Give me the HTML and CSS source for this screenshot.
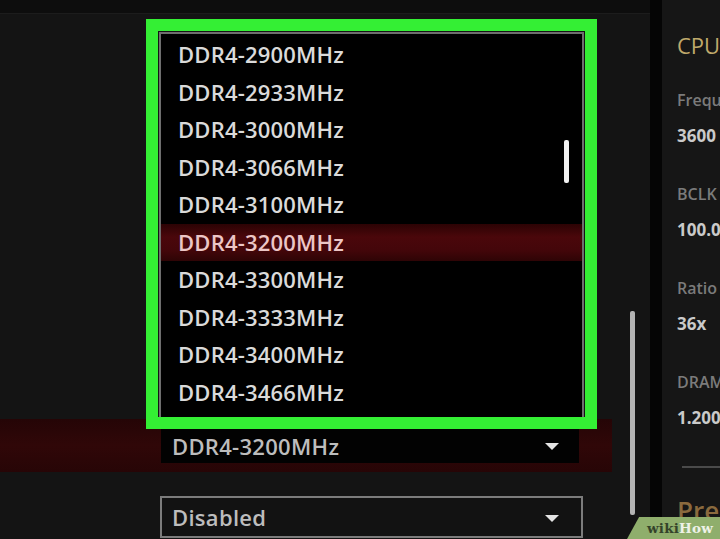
FILE: index.html
```html
<!DOCTYPE html>
<html lang="en">
<head>
<meta charset="utf-8">
<title>DRAM Frequency</title>
<link rel="stylesheet" href="styles.css">
</head>
<body>
<div class="screen">
  <div class="main">
    <div class="topbar"></div>
    <div class="main-body">
      <div class="content">
        <div class="row row-active">
          <div class="select select-filled">
            <span class="select-text">DDR4-3200MHz</span>
            <span class="caret"></span>
          </div>
        </div>
        <div class="row">
          <div class="select select-outline">
            <span class="select-text">Disabled</span>
            <span class="caret"></span>
          </div>
        </div>
      </div>
      <div class="scroll-track"><div class="scroll-thumb"></div></div>
    </div>

    <div class="menu">
      <ul class="menu-list">
        <li>DDR4-2900MHz</li>
        <li>DDR4-2933MHz</li>
        <li>DDR4-3000MHz</li>
        <li>DDR4-3066MHz</li>
        <li>DDR4-3100MHz</li>
        <li class="selected">DDR4-3200MHz</li>
        <li>DDR4-3300MHz</li>
        <li>DDR4-3333MHz</li>
        <li>DDR4-3400MHz</li>
        <li>DDR4-3466MHz</li>
      </ul>
      <div class="menu-thumb"></div>
    </div>
    <div class="highlight-frame"></div>
  </div>

  <div class="divider"></div>

  <aside class="side">
    <div class="side-title">CPU</div>
    <div class="stat">
      <div class="stat-label">Frequency</div>
      <div class="stat-value">3600 MHz</div>
    </div>
    <div class="stat">
      <div class="stat-label">BCLK</div>
      <div class="stat-value">100.0 MHz</div>
    </div>
    <div class="stat">
      <div class="stat-label">Ratio</div>
      <div class="stat-value">36x</div>
    </div>
    <div class="stat">
      <div class="stat-label">DRAM Voltage</div>
      <div class="stat-value">1.200 V</div>
    </div>
    <div class="side-rule"></div>
    <div class="side-title side-title-alt">Prediction</div>
  </aside>

  <div class="badge"><span class="badge-wiki">wiki</span><span class="badge-how">How</span></div>
</div>
</body>
</html>
```

FILE: styles.css
```css
* { box-sizing: border-box; }

html, body {
  margin: 0;
  padding: 0;
  background: #141414;
}

body {
  width: 720px;
  height: 539px;
  overflow: hidden;
  font-family: "Open Sans", "Noto Sans", "DejaVu Sans", sans-serif;
}

.screen {
  position: relative;
  display: flex;
  width: 720px;
  height: 539px;
  overflow: hidden;
}

/* ---------- main area ---------- */
.main {
  position: relative;
  width: 650px;
  height: 539px;
  display: flex;
  flex-direction: column;
  background: #141414;
}

.topbar {
  height: 14px;
  background: #0d0d0d;
  border-bottom: 1px solid #1c1c1c;
  flex: none;
}

.main-body {
  flex: 1;
  display: flex;
}

.content {
  width: 612px;
  padding-top: 405px;
}

.row {
  height: 53px;
  padding-left: 161px;
  padding-top: 9px;
}

.row-active {
  background: linear-gradient(180deg, #250506 0%, #300708 50%, #270506 100%);
  margin-bottom: 15px;
  height: 53px;
}

.select {
  width: 418px;
  height: 35px;
  display: flex;
  align-items: center;
  justify-content: space-between;
  padding: 0 20px 0 11px;
  color: #bdbdbd;
  font-size: 22px;
  font-weight: 600;
}

.select-filled {
  background: #020202;
}

.select-outline {
  width: 423px;
  height: 42px;
  border: 2px solid #7c7c7c;
  background: #121212;
  margin-left: -1px;
  padding-left: 10px;
  padding-right: 22px;
}

.select-text {
  line-height: 30px;
  letter-spacing: 0.3px;
}

.caret {
  width: 0;
  height: 0;
  border-left: 7px solid transparent;
  border-right: 7px solid transparent;
  border-top: 7px solid #e4e4e4;
  margin-top: 2px;
}

.scroll-track {
  width: 6px;
  margin-left: 18px;
  padding-top: 297px;
}

.scroll-thumb {
  width: 5px;
  height: 204px;
  background: #b3b3b3;
  border-radius: 2px;
}

/* ---------- open dropdown menu (overlay) ---------- */
.menu {
  position: absolute;
  left: 159px;
  top: 32px;
  width: 425px;
  height: 390px;
  background: #000;
  border: 2px solid #6e6e6e;
  overflow: hidden;
}

.menu-list {
  list-style: none;
  margin: 0;
  padding: 2px 0 0 0;
}

.menu-list li {
  height: 37.5px;
  line-height: 37.5px;
  padding-left: 17px;
  color: #dadada;
  font-size: 22px;
  font-weight: 600;
  letter-spacing: 0.2px;
}

.menu-list li.selected {
  background: linear-gradient(180deg, #2c0304 0%, #4a070b 35%, #44060a 70%, #2e0405 100%);
  color: #ecc6c6;
}

.menu-thumb {
  position: absolute;
  left: 403px;
  top: 106px;
  width: 5px;
  height: 43px;
  background: #f2f2f2;
  border-radius: 2px;
}

/* ---------- green annotation frame (overlay) ---------- */
.highlight-frame {
  position: absolute;
  left: 146px;
  top: 19px;
  width: 451px;
  height: 410px;
  border: 12px solid #34ef34;
}

/* ---------- divider & side panel ---------- */
.divider {
  width: 12px;
  background: #050505;
  flex: none;
}

.side {
  flex: 1;
  background: #161616;
  padding-left: 15px;
  white-space: nowrap;
  overflow: hidden;
}

.side-title {
  margin-top: 30px;
  height: 30px;
  line-height: 30px;
  font-size: 22px;
  color: #bfa96b;
  margin-bottom: 30px;
}

.stat {
  height: 94px;
}

.stat-label {
  line-height: 20px;
  font-size: 16px;
  font-weight: 600;
  color: #7b7b7b;
}

.stat-value {
  margin-top: 16px;
  line-height: 20px;
  font-size: 17px;
  font-weight: 700;
  color: #cacaca;
}

.side-rule {
  margin-left: 5px;
  border-top: 2px solid #4a4a4a;
  height: 0;
}

.side-title-alt {
  margin-top: 27px;
  font-size: 26px;
  font-weight: 600;
  color: #8a6a3e;
}

/* ---------- wikiHow watermark (overlay) ---------- */
.badge {
  position: absolute;
  right: 0;
  bottom: 0;
  width: 93px;
  height: 22px;
  background: #8fae6c;
  clip-path: polygon(13% 0, 100% 0, 100% 100%, 0 100%);
  padding-left: 20px;
  font-family: "DejaVu Serif", "Liberation Serif", serif;
  font-weight: bold;
  font-size: 13.5px;
  line-height: 23px;
  letter-spacing: 0.2px;
}

.badge-wiki { color: #34432a; }
.badge-how { color: #eef2e8; }
```
